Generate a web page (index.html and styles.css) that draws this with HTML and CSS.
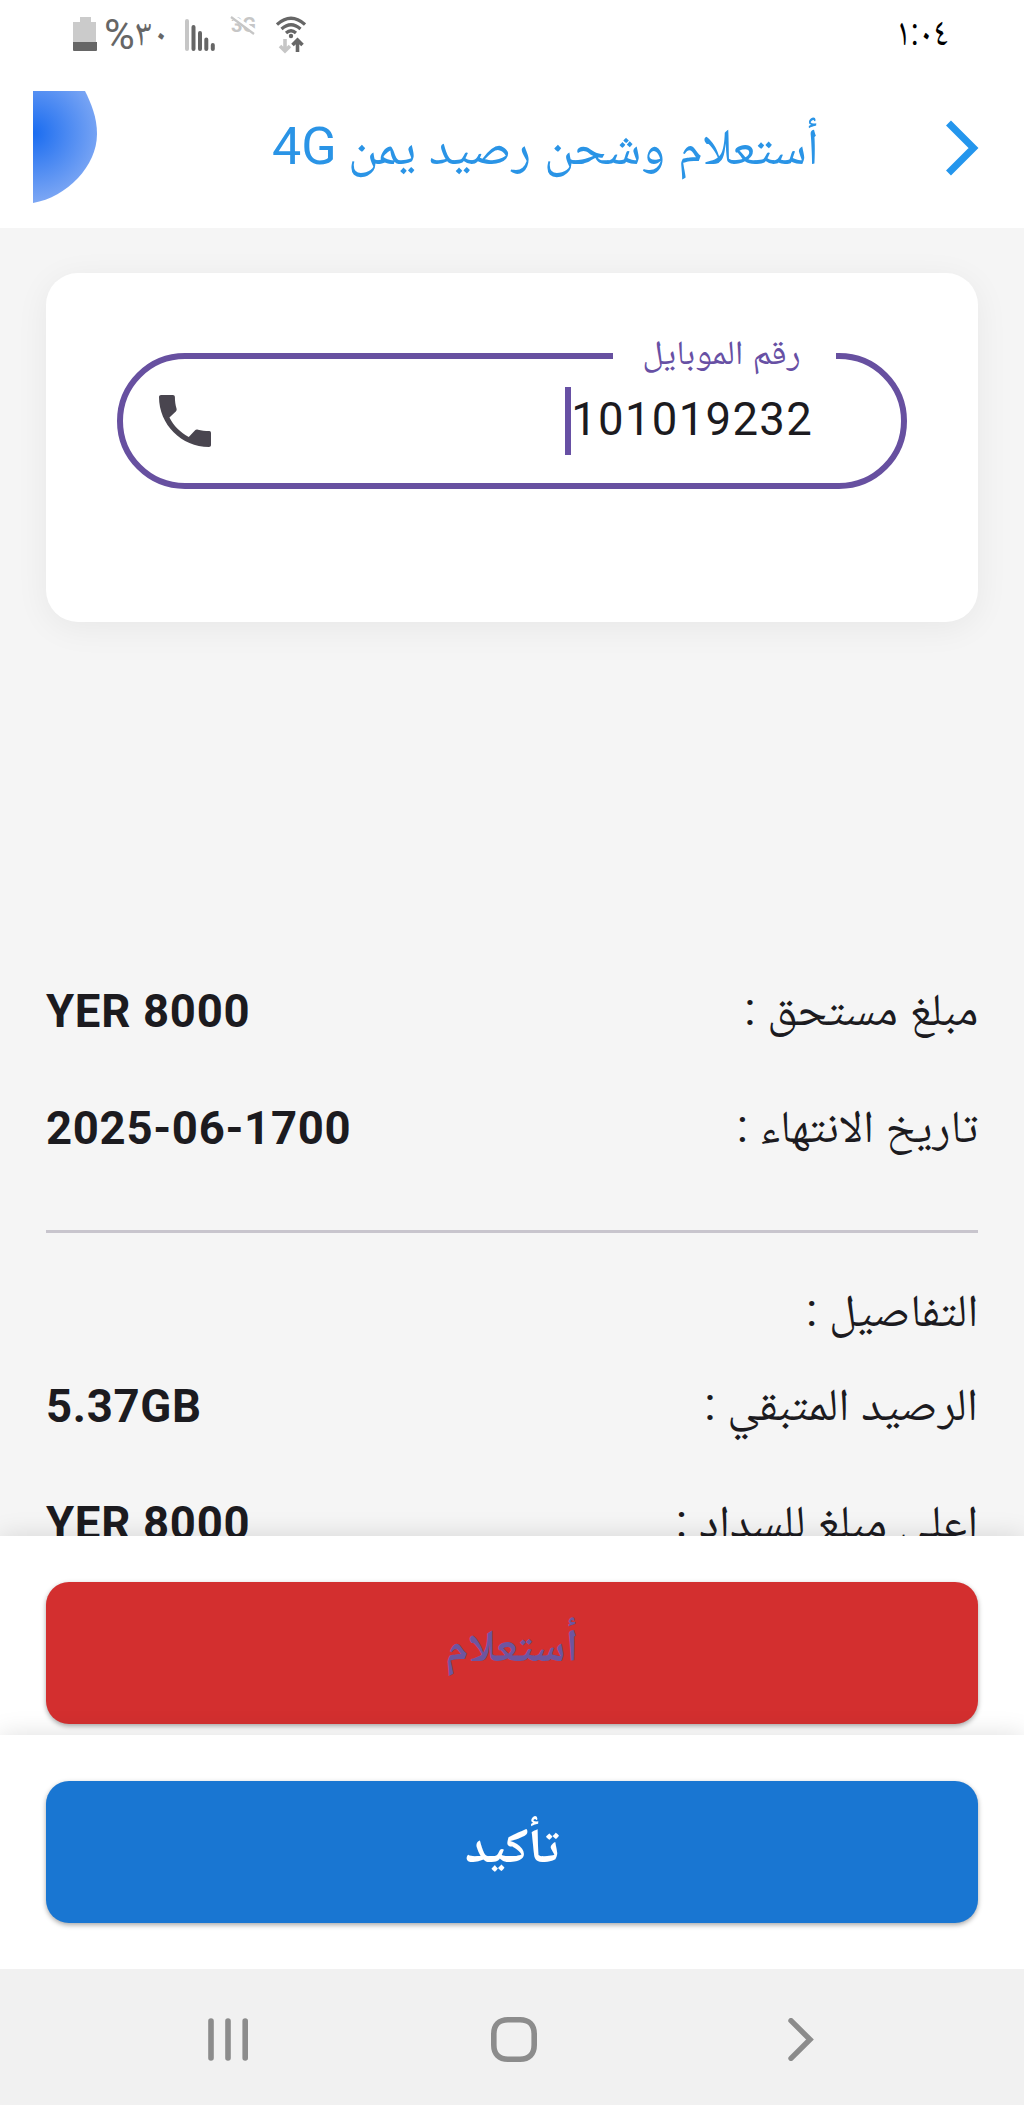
FILE: index.html
```html
<!DOCTYPE html>
<html lang="ar" dir="rtl">
<head>
<meta charset="utf-8">
<meta name="viewport" content="width=device-width">
<title>أستعلام وشحن رصيد يمن 4G</title>
<link rel="stylesheet" href="styles.css">
</head>
<body>
<div class="screen">
  <div class="status">
    <time class="clock">١:٠٤</time>
    <div class="indicators">
      <svg class="battery" viewBox="0 0 24 36"><path fill="#cbcbcb" d="M7 1h11v5h5v21H0V6h7z"/><path fill="#666" d="M0 26h24v8a1 1 0 0 1-1 1H1a1 1 0 0 1-1-1z"/></svg>
      <span class="percent">%</span><span class="level">٣٠</span>
      <svg class="signal" viewBox="0 0 30 34"><g fill="none" stroke="#666" stroke-width="4" stroke-linecap="round"><path stroke="#c6c6c6" d="M2 3v28"/><path d="M8.500 9v22M15 15v16M21.300 21.500v9.500M27.800 27v4"/></g></svg>
      <svg class="no-data" viewBox="0 0 28 20"><text x="1" y="16" textLength="25">3G</text><path stroke="#fff" stroke-width="5" d="M1 0l26 17"/><path stroke="#c6c6c6" stroke-width="2.200" d="M1 1l23 17"/></svg>
      <svg class="wifi" viewBox="0 0 30 40"><g fill="none" stroke="#666" stroke-width="3.200"><path d="M1 10.500Q15-2 29 10.500M5.500 15Q15 6.500 24.500 15M10 19Q15 14.500 20 19"/><path stroke-width="3.600" d="M21.500 38V26M16.500 31l5-5 5 5"/><path stroke="#c6c6c6" stroke-width="3.600" d="M9 25v12M4 32l5 5 5-5"/></g><circle cx="15" cy="22" r="2.200" fill="#666"/></svg>
    </div>
  </div>

  <header class="header">
    <svg class="back" viewBox="0 0 34 56"><path d="M2.500 3L27.500 28 2.500 53" fill="none" stroke="#2496ed" stroke-width="7"/></svg>
    <h1 class="title"><span class="ar">أستعلام وشحن رصيد يمن</span><span class="latin">4G</span></h1>
    <svg class="ornament" viewBox="0 0 64 112">
      <defs><radialGradient id="glow" gradientUnits="userSpaceOnUse" cx="0" cy="42" r="80"><stop offset="0" stop-color="#1a6cf0"/><stop offset=".85" stop-color="#7ba6f4"/><stop offset="1" stop-color="#80a5ee"/></radialGradient></defs>
      <path fill="url(#glow)" d="M0 0H52C58 12 64 26 64 43C64 75 34 106 0 112Z"/>
    </svg>
  </header>

  <main class="content">
    <section class="card">
      <div class="field">
        <label class="field-label"><span class="ar">رقم الموبايل</span></label>
        <div class="field-value"><span class="number">101019232</span><i class="caret"></i></div>
        <svg class="phone" viewBox="3 3 18 18"><path fill="#49454f" d="M20.400 15.500c-1.400 0-2.800-.2-3.900-.500-.500-.1-.800 0-1 .200l-2.200 2.300c-2.830-1.440-5.250-3.850-6.690-6.690l2.300-2.200c.2-.260.260-.550.150-.9C8.700 6.450 8.500 5.050 8.500 3.700c0-.4-.3-.7-.7-.7H3.700c-.4 0-.7.300-.7.700C3 13.200 10.800 21 20.300 21c.4 0 .7-.3.700-.7v-4.100c0-.4-.2-.7-.6-.7z"/></svg>
      </div>
    </section>

    <section class="details">
      <div class="row"><span class="ar due">مبلغ مستحق :</span><b>YER 8000</b></div>
      <div class="row"><span class="ar expiry">تاريخ الانتهاء :</span><b>2025-06-1700</b></div>
      <hr class="divider">
      <div class="row heading"><span class="ar">التفاصيل :</span></div>
      <div class="row"><span class="ar balance">الرصيد المتبقي :</span><b>5.37GB</b></div>
      <div class="row"><span class="ar highest">اعلى مبلغ للسداد :</span><b>YER 8000</b></div>
    </section>
  </main>

  <div class="panel inquiry"><button class="button red"><span class="ar">أستعلام</span></button></div>
  <div class="panel confirm"><button class="button blue"><span class="ar">تأكيد</span></button></div>

  <nav class="nav">
    <svg class="nav-back" viewBox="0 0 28 43"><path d="M4 2.700L23 21.500 4 40.300" fill="none" stroke="#8c8c8c" stroke-width="5.400" stroke-linecap="round"/></svg>
    <svg class="nav-home" viewBox="0 0 46 45"><path d="M17 2.800H29C38 2.800 43.200 8 43.200 17V28C43.200 37 38 42.200 29 42.200H17C8 42.200 2.800 37 2.800 28V17C2.800 8 8 2.800 17 2.800Z" fill="none" stroke="#8c8c8c" stroke-width="5.600"/></svg>
    <svg class="nav-recent" viewBox="0 0 40 43"><path d="M3 3v37M20 3v37M37.200 3v37" stroke="#8c8c8c" stroke-width="5.600" stroke-linecap="round"/></svg>
  </nav>
</div>
</body>
</html>
```
FILE: styles.css
```css
* { box-sizing: border-box; }
body { margin: 0; background: #fff; }
svg { display: block; flex: none; }

.screen {
  width: 1024px;
  height: 2105px;
  display: flex;
  flex-direction: column;
  overflow: hidden;
  font-family: Roboto, "Noto Naskh Arabic", "Noto Sans Arabic", "DejaVu Sans", sans-serif;
  color: #1c1b1f;
}
.ar { display: inline-block; white-space: nowrap; transform-origin: right center; }

.status { height: 68px; display: flex; justify-content: space-between; padding: 0 76px 0 73px; }
.clock { font-size: 39px; line-height: 65px; color: #000; transform: scaleX(.84); transform-origin: right center; }
.indicators { direction: ltr; display: flex; }
.battery { width: 24px; height: 36px; margin-top: 16px; }
.percent { width: 31px; margin-left: 7px; font-size: 42px; line-height: 70px; color: #666; }
.level { width: 30px; font-size: 38px; line-height: 64px; color: #666; }
.signal { width: 30px; height: 34px; margin: 18px 0 0 20px; }
.no-data { width: 28px; height: 20px; margin: 16px 0 0 15px; font: bold 20px Roboto, sans-serif; fill: #c6c6c6; overflow: visible; }
.wifi { width: 30px; height: 40px; margin: 14px 0 0 18px; }

.header { height: 160px; display: flex; align-items: flex-start; padding: 0 44px 0 33px; }
.back { width: 34px; height: 56px; margin-top: 52px; }
.title { width: 547px; margin: 44px 127px 0 0; display: flex; justify-content: space-between; font-size: 51px; line-height: 69px; font-weight: 400; color: #2a94e6; }
.latin { font-size: 52px; line-height: 70px; }
.ornament { width: 64px; height: 112px; margin: 23px auto 0 0; }

.content { height: 1308px; padding: 45px 46px 0; background: #f5f5f5; overflow: hidden; flex: none; }
.card { height: 349px; padding: 80px 71px 0; border-radius: 32px; background: #fff; box-shadow: 0 6px 34px rgba(0, 0, 0, .06); }
.field { position: relative; height: 136px; display: flex; justify-content: space-between; border: 6px solid #6750a0; border-radius: 68px; padding: 0 88px 0 36px; }
.field-label { position: absolute; top: -37px; right: 65px; width: 223px; height: 60px; padding-right: 35px; background: #fff; font-size: 34px; line-height: 60px; color: #6750a4; }
.field-label .ar { transform: scaleX(1.065); }
.field-value { display: flex; }
.number { font-size: 45.500px; letter-spacing: 1.300px; line-height: 122px; }
.caret { width: 6px; height: 68px; margin-top: 28px; background: #6750a4; }
.phone { width: 52px; height: 52px; margin-top: 36px; }

.details { margin-top: 346px; font-size: 45.500px; }
.row { height: 116.600px; line-height: 84px; display: flex; justify-content: space-between; }
.row .ar { transform: scaleX(1.03); }
.row .expiry { transform: scaleX(1.022); }
.row .balance { transform: scaleX(1.037); }
.row .highest { transform: scaleX(1.042); }
.row b { font-size: 45.500px; line-height: 87px; letter-spacing: .700px; direction: ltr; }
.divider { height: 3px; margin: 29px 0 36px; border: 0; background: #c8c5cd; }
.heading { height: 94px; }

.panel { position: relative; flex: none; padding: 45.500px 46px 0; background: #fff; box-shadow: 0 0 24px rgba(0, 0, 0, .13); }
.inquiry { height: 199px; }
.confirm { height: 234px; }
.button { display: block; width: 100%; height: 142px; padding: 0 0 3px; border: 0; border-radius: 23px; font: bold 45.500px Roboto, "Noto Naskh Arabic", "Noto Sans Arabic", "DejaVu Sans", sans-serif; box-shadow: 0 2px 5px rgba(0, 0, 0, .35); }
.button .ar { transform-origin: center; }
.red { background: #d32f2f; color: #6e559f; }
.blue { background: #1976d2; color: #fff; padding-bottom: 1px; }
.blue .ar { font-size: 49px; }

.nav { position: relative; flex: none; height: 136px; display: flex; padding: 49px 209px 0 0; background: #f1f1f1; }
.nav-back { width: 28px; height: 43px; }
.nav-home { width: 46px; height: 45px; margin: -1px 250px 0 0; }
.nav-recent { width: 40px; height: 43px; margin-right: 243px; }
```
